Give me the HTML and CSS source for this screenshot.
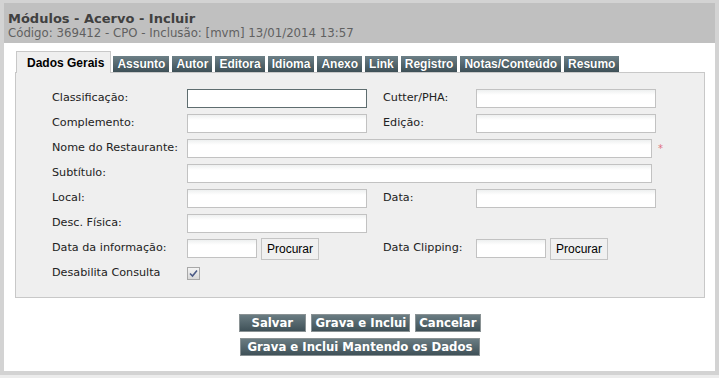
FILE: index.html
```html
<!DOCTYPE html>
<html>
<head>
    <meta charset="utf-8">
    <title>Módulos - Acervo - Incluir</title>
    <link rel="stylesheet" href="styles.css">
</head>
<body>
    <div class="dialog">
        <!--cabeçalho-->
        <div class="header">
            <div class="title">Módulos - Acervo - Incluir</div>
            <div class="subtitle">Código: 369412 - CPO - Inclusão: [mvm] 13/01/2014 13:57</div>
        </div>
        <div class="content">
            <!--abas-->
            <div class="tabs">
                <span class="tab active">Dados Gerais</span>
                <span class="tab">Assunto</span>
                <span class="tab">Autor</span>
                <span class="tab">Editora</span>
                <span class="tab">Idioma</span>
                <span class="tab">Anexo</span>
                <span class="tab">Link</span>
                <span class="tab">Registro</span>
                <span class="tab">Notas/Conteúdo</span>
                <span class="tab">Resumo</span>
            </div>
            <!--formulário-->
            <div class="panel">
                <div class="row">
                    <label class="lbl">Classificação:</label>
                    <input class="field focus" type="text">
                    <label class="lbl lbl-right">Cutter/PHA:</label>
                    <input class="field" type="text">
                </div>
                <div class="row">
                    <label class="lbl">Complemento:</label>
                    <input class="field" type="text">
                    <label class="lbl lbl-right">Edição:</label>
                    <input class="field" type="text">
                </div>
                <div class="row">
                    <label class="lbl">Nome do Restaurante:</label>
                    <input class="field wide" type="text">
                    <span class="required">*</span>
                </div>
                <div class="row">
                    <label class="lbl">Subtítulo:</label>
                    <input class="field wide" type="text">
                </div>
                <div class="row">
                    <label class="lbl">Local:</label>
                    <input class="field" type="text">
                    <label class="lbl lbl-right">Data:</label>
                    <input class="field" type="text">
                </div>
                <div class="row">
                    <label class="lbl">Desc. Física:</label>
                    <input class="field" type="text">
                </div>
                <div class="row">
                    <label class="lbl">Data da informação:</label>
                    <div class="date-group">
                        <input class="field short" type="text">
                        <button class="search-btn">Procurar</button>
                    </div>
                    <label class="lbl lbl-right">Data Clipping:</label>
                    <div class="date-group">
                        <input class="field short" type="text">
                        <button class="search-btn">Procurar</button>
                    </div>
                </div>
                <div class="row">
                    <label class="lbl">Desabilita Consulta</label>
                    <span class="checkbox">
                        <svg width="9" height="9" viewBox="0 0 9 9">
                            <path d="M1 4.5 L3.5 7 L8 1.5" fill="none" stroke="#4b5a86" stroke-width="1.6"/>
                        </svg>
                    </span>
                </div>
            </div>
            <!--botões-->
            <div class="actions">
                <div class="actions-row">
                    <button class="action-btn salvar">Salvar</button>
                    <button class="action-btn">Grava e Inclui</button>
                    <button class="action-btn">Cancelar</button>
                </div>
                <div class="actions-row">
                    <button class="action-btn">Grava e Inclui Mantendo os Dados</button>
                </div>
            </div>
        </div>
    </div>
</body>
</html>
```

FILE: styles.css
```css
body {
    margin: 0;
    background-color: #ececec;
    font-family: "DejaVu Sans", Verdana, sans-serif;
    font-size: 11px;
    color: #222222;
}
.dialog {
    width: 711px;
    border: 4px solid #d3d3d3;
    border-top-width: 3px;
    background-color: #ffffff;
}
.header {
    background-color: #c0c0c0;
    height: 40px;
    padding: 8px 0 0 4px;
    box-sizing: border-box;
}
.title {
    font-weight: bold;
    font-size: 13px;
    color: #404040;
    line-height: 15px;
}
.subtitle {
    font-size: 11.75px;
    color: #606060;
    line-height: 15px;
}
.content {
    padding: 8px 10px 15px 11px;
}
.tabs {
    display: flex;
    align-items: flex-end;
    padding-left: 1px;
    font-family: "Liberation Sans", Arial, sans-serif;
    font-size: 12px;
    font-weight: bold;
    position: relative;
    z-index: 1;
}
.tab {
    height: 16px;
    line-height: 16px;
    padding: 0 4px;
    margin-right: 3px;
    color: #ffffff;
    background: linear-gradient(#6d8087, #3e5057);
    text-shadow: 0 0 1px #2a3a40;
}
.tab.active {
    height: 21px;
    line-height: 22px;
    padding: 0 6px 0 10px;
    margin-right: 2px;
    margin-bottom: -1px;
    color: #000000;
    background: #efefef;
    border: 1px solid #c8c8c8;
    border-bottom: none;
    text-shadow: none;
}
.panel {
    background-color: #efefef;
    border: 1px solid #c8c8c8;
    padding: 13px 0 11px 36px;
}
.row {
    display: flex;
    align-items: center;
    height: 25px;
}
.lbl {
    width: 135px;
    flex: none;
    margin-top: -3px;
    font-size: 11.2px;
}
.lbl-right {
    width: 93px;
    margin-left: 16px;
}
.field {
    width: 180px;
    height: 19px;
    box-sizing: border-box;
    border: 1px solid #c2c2c2;
    background: linear-gradient(#eef0f0, #ffffff 5px);
    margin: 0;
    padding: 0 2px;
    font-family: inherit;
    font-size: 11px;
}
.field.focus {
    border-color: #5e6d6f;
    background: #ffffff;
}
.field.wide {
    width: 465px;
}
.field.short {
    width: 70px;
}
.required {
    color: #e07080;
    font-size: 10px;
    margin-left: 6px;
}
.date-group {
    display: flex;
    align-items: center;
    width: 180px;
}
.search-btn {
    height: 22px;
    margin: 0 0 0 4px;
    padding: 0 5px;
    border: 1px solid #c4c4c4;
    background-color: #f0f0f0;
    font-family: "Liberation Sans", Arial, sans-serif;
    font-size: 12px;
    color: #000000;
}
.checkbox {
    width: 11px;
    height: 11px;
    border: 1px solid #a8a8a8;
    background: linear-gradient(#f4f4f4, #d8d8d8);
    display: flex;
    align-items: center;
    justify-content: center;
}
.actions {
    display: flex;
    flex-direction: column;
    align-items: center;
    gap: 6px;
    padding-top: 16px;
}
.actions-row {
    display: flex;
    gap: 5px;
}
.action-btn {
    height: 18px;
    padding: 0 3px;
    margin: 0;
    border: 1px solid #8a9294;
    background: linear-gradient(#6a7c82, #3f5158);
    color: #ffffff;
    font-family: "DejaVu Sans", Verdana, sans-serif;
    font-size: 11.7px;
    font-weight: bold;
    line-height: 16px;
}
.actions-row + .actions-row .action-btn {
    padding: 0 7px;
}
.salvar {
    width: 67px;
    text-align: left;
    padding-left: 11px;
}
```
